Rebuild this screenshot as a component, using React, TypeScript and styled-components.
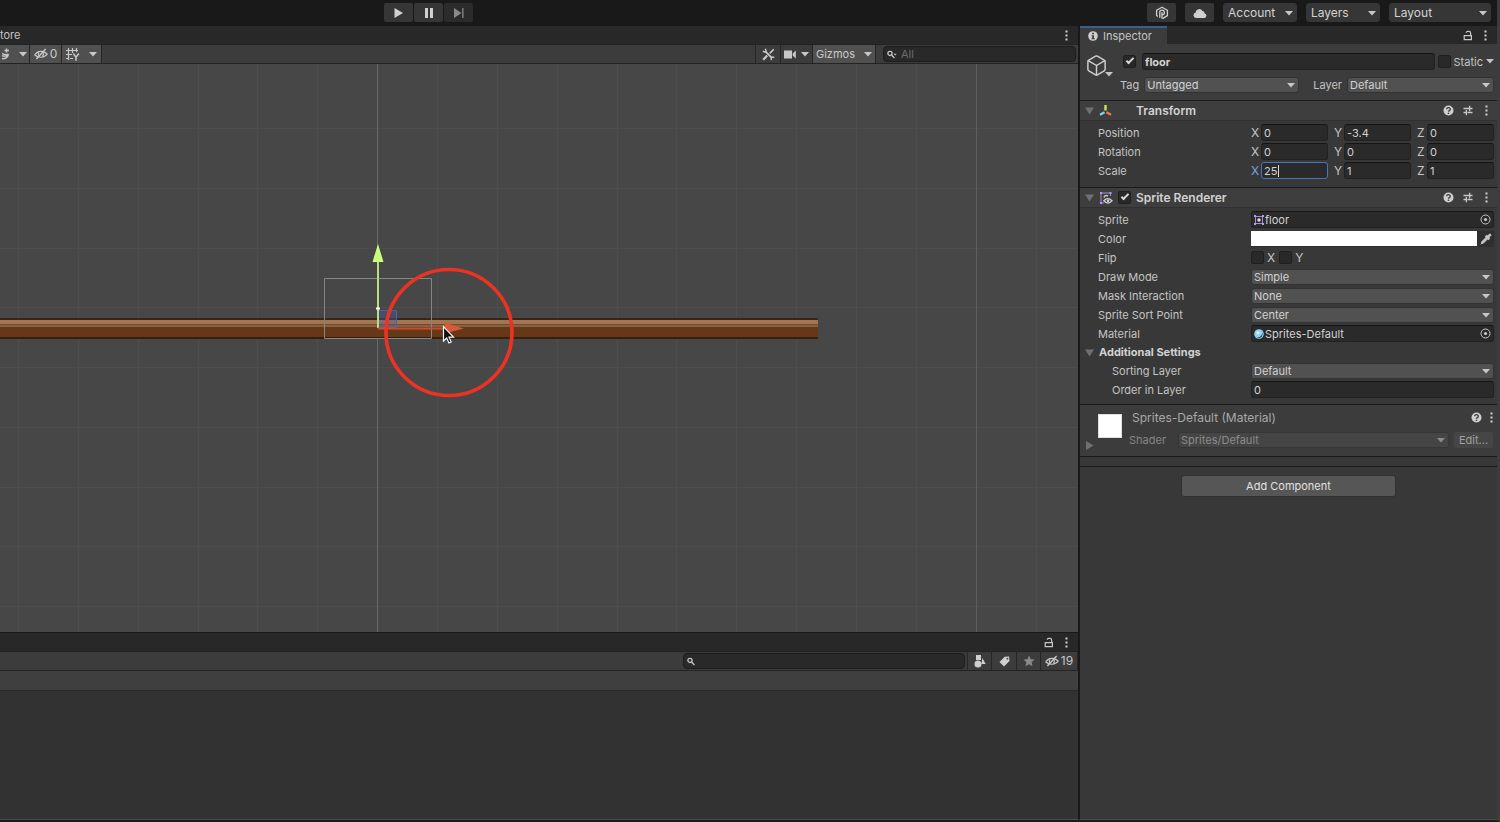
import React from "react";
import styled, { createGlobalStyle, css } from "styled-components";
import { Box, Pipette } from "lucide-react";

const GlobalStyle = createGlobalStyle`
  *, *::before, *::after { box-sizing: border-box; }
  body {
    margin: 0;
    background: #191919;
    color: #c4c4c4;
    font-family: Inter, "Liberation Sans", sans-serif;
    font-size: 12px;
    line-height: 16px;
  }
  button, input, select { font: inherit; color: inherit; margin: 0; }
  svg { display: block; flex: none; }
`;

/* ---------- page frame ---------- */

const Page = styled.div`
  display: flex;
  flex-direction: column;
  min-height: 100vh;
  border-right: 3px solid #3c3c3c;
  border-bottom: 2px solid #1b1c20;
`;

const TopBar = styled.header`
  display: flex;
  justify-content: space-between;
  align-items: flex-start;
  height: 26px;
  padding: 3px 6px 0 384px;
  background: #191919;
`;

const PlayGroup = styled.div`
  display: flex;
  gap: 1px;
`;

const TopRight = styled.div`
  display: flex;
  gap: 9px;
`;

const TopButton = styled.button<{ $dim?: boolean }>`
  display: flex;
  align-items: center;
  justify-content: center;
  width: 29px;
  height: 19px;
  padding: 0;
  border: 0;
  border-radius: 2px;
  background: ${(p) => (p.$dim ? "#2b2b2b" : "#363636")};
  color: ${(p) => (p.$dim ? "#8a8a8a" : "#d0d0d0")};
`;

const Workspace = styled.main`
  flex: 1;
  display: grid;
  grid-template-columns: minmax(0, 1fr) 419px;
`;

const LeftColumn = styled.div`
  display: flex;
  flex-direction: column;
  min-width: 0;
`;

const TabBar = styled.div`
  display: flex;
  align-items: center;
  justify-content: space-between;
  height: 18px;
  background: #282828;
`;

const TabActions = styled.div`
  display: flex;
  align-items: center;
  gap: 8px;
  margin-left: auto;
  padding-right: 7px;
`;

const ClippedTab = styled.span`
  color: #c4c4c4;
  font-size: 11px;
`;

const Toolbar = styled.div`
  display: flex;
  justify-content: space-between;
  height: 20px;
  border-top: 1px solid #232323;
  border-bottom: 1px solid #232323;
  background: #3c3c3c;
`;

const ToolGroup = styled.div<{ $end?: boolean }>`
  display: flex;
  align-items: stretch;
  margin-left: ${(p) => (p.$end ? "auto" : "0")};
`;

const Separator = styled.div`
  width: 1px;
  background: #262626;
`;

const ToolButton = styled.button<{ $on?: boolean; $w: number; $gap?: number }>`
  display: flex;
  align-items: center;
  justify-content: center;
  gap: ${(p) => p.$gap ?? 2}px;
  width: ${(p) => p.$w}px;
  padding: 0;
  border: 0;
  border-right: 1px solid #262626;
  background: ${(p) => (p.$on ? "#505050" : "#3c3c3c")};
  color: #c8c8c8;
`;

const ToolText = styled.span`
  font-size: 11px;
`;

const SearchBox = styled.label<{ $w: number }>`
  display: flex;
  align-items: center;
  gap: 4px;
  align-self: center;
  width: ${(p) => p.$w}px;
  height: 16px;
  margin: 0 2px 0 7px;
  padding: 0 3px;
  border: 1px solid #1c1c1c;
  border-radius: 4px;
  background: #292929;
  input {
    flex: 1;
    min-width: 0;
    height: 14px;
    padding: 0;
    border: 0;
    outline: 0;
    background: transparent;
    font-size: 11px;
  }
  input::placeholder { color: #6c6c6c; }
`;

const SceneView = styled.section`
  flex: 1;
  min-height: 400px;
  overflow: hidden;
  background: #474747;
`;

const ProjectPanel = styled.section`
  display: flex;
  flex-direction: column;
  height: 188px;
  border-top: 1px solid #191919;
`;

const Breadcrumb = styled.div`
  height: 20px;
  border-bottom: 1px solid #2a2a2a;
  background: #3f3f3f;
`;

const ProjectBody = styled.div`
  flex: 1;
  border-bottom: 1px solid #4a4a4a;
  background: #323232;
`;

/* ---------- inspector ---------- */

const Inspector = styled.aside`
  display: flex;
  flex-direction: column;
  border-left: 2px solid #191919;
  border-bottom: 1px solid #4a4a4a;
  background: #383838;
`;

const ActiveTab = styled.div`
  display: flex;
  align-items: center;
  gap: 5px;
  align-self: stretch;
  width: 87px;
  padding-left: 8px;
  border-top: 2px solid #3a5f8e;
  background: #3c3c3c;
  font-size: 11px;
`;

const ObjectHeader = styled.div`
  display: grid;
  grid-template-columns: 30px minmax(0, 1fr);
  gap: 5px;
  height: 56px;
  padding: 9px 3px 0 5px;
  background: #3c3c3c;
`;

const ObjectIcon = styled.div`
  display: flex;
  align-items: flex-end;
  height: 24px;
  svg + svg { margin-left: -3px; }
`;

const HeaderRows = styled.div`
  display: flex;
  flex-direction: column;
  gap: 6px;
`;

const HeaderRow = styled.div<{ $gap: number; $inset?: boolean }>`
  display: flex;
  align-items: center;
  gap: ${(p) => p.$gap}px;
  height: 17px;
  padding-left: ${(p) => (p.$inset ? 3 : 0)}px;
`;

const ComponentHeader = styled.header`
  display: flex;
  align-items: center;
  height: 21px;
  padding: 0 6px 0 5px;
  border-top: 1px solid #1a1a1a;
  border-bottom: 1px solid #303030;
  background: #3e3e3e;
`;

const IconSlot = styled.span<{ $w: number }>`
  display: flex;
  align-items: center;
  width: ${(p) => p.$w}px;
`;

const ComponentTitle = styled.h2`
  flex: 1;
  margin: 0;
  font-size: 12px;
  font-weight: 600;
  line-height: 16px;
  color: #d2d2d2;
`;

const HeaderActions = styled.div`
  display: flex;
  align-items: center;
  gap: 8px;
`;

const Rows = styled.div<{ $end: number }>`
  padding: 2px 3px ${(p) => p.$end}px 18px;
`;

const Row = styled.div<{ $indent?: boolean }>`
  display: grid;
  grid-template-columns: 153px minmax(0, 1fr);
  align-items: center;
  height: 19px;
  > :first-child { padding-left: ${(p) => (p.$indent ? 14 : 0)}px; }
`;

const Label = styled.label`
  font-size: 11px;
  color: #c4c4c4;
`;

const RowName = styled.span`
  font-size: 11px;
  color: #c4c4c4;
`;

const Axes = styled.div`
  display: grid;
  grid-template-columns: repeat(3, minmax(0, 1fr));
  gap: 6px;
`;

const AxisCell = styled.label<{ $active?: boolean }>`
  display: grid;
  grid-template-columns: 10px minmax(0, 1fr);
  align-items: center;
  position: relative;
  color: ${(p) => (p.$active ? "#7ba1d8" : "#c4c4c4")};
`;

const TextCaret = styled.i`
  position: absolute;
  left: 27px;
  top: 3px;
  width: 1px;
  height: 12px;
  background: #d8d8d8;
`;

const fieldBox = css`
  height: 17px;
  border: 1px solid #212121;
  border-top-color: #141414;
  border-radius: 3px;
  background: #2a2a2a;
`;

const Field = styled.input<{ $active?: boolean; $bold?: boolean }>`
  ${fieldBox}
  flex: 1;
  width: 100%;
  min-width: 0;
  padding: 0 2px;
  outline: 0;
  font-size: 11px;
  font-weight: ${(p) => (p.$bold ? 700 : 400)};
  color: #d2d2d2;
  ${(p) => p.$active && "border-color: #4476c2;"}
`;

const Tick = styled.input.attrs({ type: "checkbox" })`
  appearance: none;
  flex: none;
  display: grid;
  place-items: center;
  width: 13px;
  height: 13px;
  border: 1px solid #1f1f1f;
  border-radius: 2px;
  background: #292929;
  &:checked::after {
    content: "";
    width: 8px;
    height: 4px;
    margin-bottom: 3px;
    border: solid #d8d8d8;
    border-width: 0 0 2px 2px;
    transform: rotate(-45deg);
  }
`;

const FlipGroup = styled.div`
  display: flex;
  gap: 4px;
  label {
    display: flex;
    align-items: center;
    gap: 3px;
  }
`;

const SelectFrame = styled.span<{ $w?: number; $tone?: "top" | "faint" }>`
  position: relative;
  display: block;
  ${(p) => (p.$w ? `width: ${p.$w}px;` : "flex: 1;")}
  min-width: 0;
  select {
    appearance: none;
    display: block;
    width: 100%;
    height: ${(p) => (p.$tone === "top" ? 19 : 16)}px;
    padding: 0 16px 0 ${(p) => (p.$tone === "top" ? 4 : 2)}px;
    border: 1px solid ${(p) => (p.$tone ? "#363636" : "#323232")};
    border-radius: 3px;
    outline: 0;
    background: ${(p) => (p.$tone === "top" ? "#363636" : p.$tone === "faint" ? "#454545" : "#515151")};
    color: ${(p) => (p.$tone === "faint" ? "#8c8c8c" : "#d2d2d2")};
    font-size: ${(p) => (p.$tone === "top" ? 12 : 11)}px;
    line-height: 14px;
  }
  svg {
    position: absolute;
    right: 4px;
    top: calc(50% - 2px);
    color: ${(p) => (p.$tone === "faint" ? "#8c8c8c" : "#c8c8c8")};
    pointer-events: none;
  }
`;

const ObjectField = styled.button`
  ${fieldBox}
  display: flex;
  align-items: center;
  gap: 1px;
  width: 100%;
  padding: 0 2px;
  font-size: 11px;
  text-align: left;
  span { flex: 1; color: #d2d2d2; }
`;

const ColorField = styled.div`
  display: flex;
  align-items: center;
  height: 16px;
  background: #2f2f2f;
`;

const ColorSwatch = styled.button`
  flex: 1;
  height: 15px;
  border: 0;
  padding: 0;
  background: #fff;
`;

const IconButton = styled.button`
  display: flex;
  align-items: center;
  justify-content: center;
  padding: 0;
  border: 0;
  background: transparent;
  color: #c8c8c8;
`;

const MenuButton = styled(IconButton)`
  width: 9px;
`;

const PipetteButton = styled(IconButton)`
  width: 17px;
  height: 16px;
`;

const SubHeading = styled.h3`
  display: flex;
  align-items: center;
  gap: 5px;
  height: 18px;
  margin: 0 0 0 -13px;
  font-size: 11px;
  font-weight: 700;
  color: #d2d2d2;
`;

const MaterialSection = styled.section`
  display: grid;
  grid-template-columns: 13px 24px minmax(0, 1fr);
  height: 53px;
  padding: 4px 4px 0 5px;
  border-top: 1px solid #1a1a1a;
  border-bottom: 1px solid #1a1a1a;
  background: #3c3c3c;
`;

const FoldoutSlot = styled.div`
  padding-top: 32px;
`;

const MaterialSwatch = styled.div`
  width: 24px;
  height: 24px;
  margin-top: 5px;
  border: 1px solid #ddd;
  background: #fff;
`;

const MaterialBody = styled.div`
  display: flex;
  flex-direction: column;
  gap: 6px;
  padding-left: 7px;
`;

const MaterialTitle = styled.div`
  display: flex;
  align-items: center;
  justify-content: space-between;
  height: 17px;
  padding-left: 3px;
  color: #a8a8a8;
  font-size: 12px;
`;

const MaterialRow = styled.div`
  display: flex;
  align-items: center;
  gap: 5px;
  color: #858585;
  label { width: 44px; font-size: 11px; }
`;

const EditButton = styled.button`
  width: 39px;
  height: 16px;
  padding: 0;
  border: 0;
  border-radius: 2px;
  background: #464646;
  color: #a0a0a0;
  font-size: 11px;
  line-height: 14px;
`;

const Divider = styled.div`
  height: 10px;
  border-bottom: 1px solid #1a1a1a;
`;

const AddButton = styled.button`
  align-self: center;
  width: 215px;
  height: 22px;
  margin-top: 8px;
  padding: 0;
  border: 1px solid #303030;
  border-radius: 3px;
  background: #565656;
  color: #e0e0e0;
  font-size: 11px;
`;

/* ---------- icons ---------- */

const Caret = () => (
  <svg width="8" height="5" viewBox="0 0 8 5" fill="currentColor"><path d="M0 0h8L4 4.6z" /></svg>
);
const Foldout = ({ closed }: { closed?: boolean }) => (
  <svg width="9" height="9" viewBox="0 0 9 9" fill="#707070">
    <path d={closed ? "M1 0l7.500 4.500L1 9z" : "M0 1.500h9L4.500 8.500z"} />
  </svg>
);
const Kebab = () => (
  <svg width="3" height="11" viewBox="0 0 3 11" fill="#d0d0d0">
    <path d="M.5.5h2v2h-2zM.5 4.500h2v2h-2zM.5 8.500h2v2h-2z" />
  </svg>
);
const Lock = () => (
  <svg width="10" height="11" viewBox="0 0 10 11" fill="none" stroke="#c8c8c8" strokeWidth="1.200">
    <path d="M1.200 5.600h7.200v4H1.200zM7.600 5.600V3a1.600 1.600 0 0 0-1.600-1.600H4.800A1.600 1.600 0 0 0 3.200 2.800" />
  </svg>
);
const Help = () => (
  <svg width="11" height="11" viewBox="0 0 11 11">
    <circle cx="5.500" cy="5.500" r="5" fill="#cfcfcf" />
    <path d="M3.700 4.300a1.800 1.600 0 1 1 2.600 1.300q-.8.400-.8 1.200" fill="none" stroke="#3a3a3a" strokeWidth="1.300" />
    <path d="M4.800 7.600h1.400v1.300H4.800z" fill="#3a3a3a" />
  </svg>
);
const Preset = () => (
  <svg width="12" height="11" viewBox="0 0 12 11" fill="none" stroke="#c8c8c8" strokeWidth="1.300">
    <path d="M1.500 3.500h5.500M7.600.8v5.400M7.600 3.500H10.500M1.500 7.500H4.400M4.400 5v5.200M5.500 7.500h5" />
  </svg>
);
const Info = () => (
  <svg width="10" height="10" viewBox="0 0 10 10">
    <circle cx="5" cy="5" r="4.800" fill="#d0d0d0" />
    <path d="M4.200 1.700h1.700v1.500H4.200zM3.600 4.200h2.300v3h.8v1H3.500v-1h.8v-2h-.7z" fill="#333" />
  </svg>
);
const Magnifier = ({ menu }: { menu?: boolean }) => (
  <svg width={menu ? 10 : 8} height="9" viewBox={menu ? "0 0 10 9" : "0 0 8 9"} fill="none" stroke="#c8c8c8" strokeWidth="1.300">
    <circle cx="3" cy="3.400" r="2.100" />
    <path d="M4.600 5l2.800 3" />
    {menu && <path d="M6.600 3.800h3.200L8.200 5.600z" fill="#c8c8c8" stroke="none" />}
  </svg>
);
const HiddenEye = () => (
  <svg width="14" height="12" viewBox="0 0 14 12" fill="none" stroke="#c8c8c8" strokeWidth="1.200">
    <path d="M.8 7C3.500 2.200 10 2.200 13.200 6.200 10.500 10 4 10.200.8 7z" />
    <path d="M5 4.500a2.300 2.300 0 0 0 .4 3.600M8.400 4.200a2.300 2.300 0 0 1-.2 4" />
    <path d="M2.400 11L11.600 1" strokeWidth="1.400" />
  </svg>
);
const GridY = () => (
  <svg width="14" height="13" viewBox="0 0 14 13" fill="none" stroke="#c8c8c8" strokeWidth="1.200">
    <path d="M0 2.500h12M0 6.500h6M0 10.500h2M4 10.500h3M2.500 0v12M6.500 0v5M10.500 0v4" />
    <path d="M7.300 5.500l2.700 3.700 2.800-3.700M10 9v3.800" strokeWidth="1.500" />
  </svg>
);
const Effects = () => (
  <svg width="8" height="12" viewBox="0 0 8 12" fill="none" stroke="#c8c8c8" strokeWidth="1.500">
    <path d="M4.500.5v4M2.500 2.500h4.500M0 5.300q2.500 2 6.500 1M0 7.800q4 1.200 6.500-1.500M0 10.500q4.500 1 6.500-4" />
  </svg>
);
const ToolsIcon = () => (
  <svg width="13" height="13" viewBox="0 0 13 13" fill="none" stroke="#c8c8c8">
    <path d="M11.800 1.200L7.700 5.400" strokeWidth="1.600" />
    <path d="M5.200 7.600l-4 4.200" strokeWidth="2.200" />
    <path d="M3.800 3.900l6 6" strokeWidth="1.800" />
    <path d="M.8 3.300l2.400.8.900-.9-.7-2.400" strokeWidth="1.500" />
    <path d="M9.400 12.200l-.3-2.300 1-.9 2.300.4" strokeWidth="1.400" />
  </svg>
);
const Camera = () => (
  <svg width="12" height="9" viewBox="0 0 12 9" fill="#c8c8c8"><path d="M0 .5h8v8H0zM8.700 3.500L11.800.5v8L8.700 5.500z" /></svg>
);
const Play = () => (
  <svg width="9" height="10" viewBox="0 0 9 10" fill="currentColor"><path d="M.5 0L9 5 .5 10z" /></svg>
);
const Pause = () => (
  <svg width="8" height="10" viewBox="0 0 8 10" fill="currentColor"><path d="M0 0h3v10H0zM5 0h3v10H5z" /></svg>
);
const Step = () => (
  <svg width="10" height="10" viewBox="0 0 10 10" fill="currentColor"><path d="M0 0l7.500 5L0 10zM8.200 0h1.300v10H8.200z" /></svg>
);
const CollabIcon = () => (
  <svg width="14" height="14" viewBox="0 0 14 14" fill="none" stroke="#d0d0d0" strokeWidth="1.300" strokeLinejoin="round">
    <path d="M2.800 10.400L1.600 9.400V4.200L7 1.200l5.400 3v5.400L7.600 12.600" />
    <path d="M4.800 11.800V6.200Q4.800 4.200 7 4.200t2.400 2.200Q9.400 8.800 7 8.800" />
    <path d="M7 6.200v6.600" />
  </svg>
);
const Cloud = () => (
  <svg width="14" height="10" viewBox="0 0 14 10" fill="#d0d0d0">
    <path d="M3 10a2.800 2.800 0 0 1-.4-5.500A3.700 3.700 0 0 1 9.500 3 2.500 2.500 0 0 1 11.700 5.500 2.300 2.300 0 0 1 11.500 10z" />
  </svg>
);
const TransformIcon = () => (
  <svg width="13" height="13" viewBox="0 0 13 13" fill="none" strokeWidth="2.400">
    <path d="M6.500 1v5.500" stroke="#c6e85a" />
    <path d="M5.500 8.200L1 10.800" stroke="#7cd3f2" />
    <path d="M7.500 8.200L12 10.800" stroke="#f0764a" />
  </svg>
);
const SpriteRendererIcon = () => (
  <svg width="14" height="14" viewBox="0 0 14 14" fill="none">
    <path d="M2 2h9.500M2 2v10M11.500 2v3M2 12h3" stroke="#a58ad8" />
    <path d="M1 1h2v2H1zM10.500 1h2v2h-2zM1 11h2v2H1z" fill="#b49ae8" />
    <path d="M5 6.500q1-3 4-1.500" stroke="#c8c8c8" strokeWidth="1.600" />
    <path d="M4.800 9.800q4-4.500 8.200 0-4 4.500-8.200 0z" stroke="#d0d0d0" strokeWidth="1.300" />
    <circle cx="9" cy="9.800" r="1.300" fill="#d0d0d0" />
  </svg>
);
const SpriteIcon = () => (
  <svg width="10" height="10" viewBox="0 0 10 10" fill="none">
    <path d="M1.500 1.500h7v7h-7z" stroke="#a58ad8" />
    <path d="M0 0h2v2H0zM8 0h2v2H8zM0 8h2v2H0zM8 8h2v2H8z" fill="#b49ae8" />
    <circle cx="5" cy="5" r="1.700" fill="#e0e0e0" />
  </svg>
);
const MaterialIcon = () => (
  <svg width="10" height="10" viewBox="0 0 10 10">
    <circle cx="5" cy="5" r="4.800" fill="#8fd0ee" />
    <path d="M8.200 3A4.300 4.300 0 0 1 3 8.200Q5.500 9.800 7.800 7.800 9.500 5.500 8.200 3z" fill="#1d3442" />
    <circle cx="4" cy="3.800" r="1.600" fill="#d6f2fc" />
  </svg>
);
const Picker = () => (
  <svg width="11" height="11" viewBox="0 0 11 11" fill="none" stroke="#c8c8c8">
    <circle cx="5.500" cy="5.500" r="4.500" />
    <circle cx="5.500" cy="5.500" r="1.600" fill="#c8c8c8" stroke="none" />
  </svg>
);
const Shapes = () => (
  <svg width="12" height="13" viewBox="0 0 12 13" fill="#d0d0d0">
    <path d="M2 0h5v5H2zM8.300 3l3.400 6H7.500z" />
    <circle cx="4" cy="9" r="3.500" />
  </svg>
);
const TagIcon = () => (
  <svg width="11" height="11" viewBox="0 0 11 11">
    <path d="M5.700.8L10 .5 10.500 5 5 10.500.5 6z" fill="#d0d0d0" />
    <circle cx="8.400" cy="2.700" r=".9" fill="#3c3c3c" />
  </svg>
);
const Star = () => (
  <svg width="12" height="12" viewBox="0 0 12 12" fill="#8a8a8a">
    <path d="M6 .5l1.600 3.700 4 .4-3 2.700.9 4L6 9.200l-3.500 2.100.9-4-3-2.700 4-.4z" />
  </svg>
);

/* ---------- scene drawing ---------- */

const columns = Array.from({ length: 44 }, (_, i) => 18 + Math.round(i * 59.86));
const gridRows = Array.from({ length: 24 }, (_, i) => 64 + Math.round(i * 59.75));

const SceneDrawing = () => (
  <svg width="100%" height="100%" role="img" aria-label="Scene with a wooden floor and a move gizmo">
    <g stroke="#4d4d4d">
      {columns.map((x) => <path key={x} d={`M${x + 0.5} 0v1600`} />)}
      {gridRows.map((y) => <path key={y} d={`M0 ${y + 0.5}h2700`} />)}
    </g>
    <path d="M377.500 0v1600" stroke="#6a6a6a" />
    <path d="M976.500 0v1600" stroke="#5e5e5e" />
    <g>
      <path d="M0 255h818v20H0z" fill="#663818" />
      <path d="M0 254h818v2H0z" fill="#3a2519" />
      <path d="M0 256h818v4H0z" fill="#a37650" />
      <path d="M0 260h818v1H0z" fill="#6b4e38" />
      <path d="M0 261h818v2H0z" fill="#8a6040" />
      <path d="M0 273h818v2H0z" fill="#33200f" />
    </g>
    <path d="M324.500 214.500h107v60h-107z" fill="none" stroke="#858585" />
    <path d="M378.500 246.500h18v17h-18z" fill="#4a5a9a" fillOpacity=".4" stroke="#4f5fae" />
    <path d="M378 196v68" stroke="#b7e07a" strokeWidth="2" />
    <path d="M378 180l5.500 18h-11z" fill="#c9ff7d" />
    <path d="M378 264.500h67" stroke="#c5502f" strokeWidth="2" />
    <path d="M445 258.500l18.500 6-18.500 5z" fill="#d9573a" />
    <path d="M376 243.500h4v2h-4z" fill="#fff" />
    <circle cx="449" cy="268.500" r="63" fill="none" stroke="#ec3323" strokeWidth="3.600" />
    <path d="M443.500 262.500v14.500l3.200-3 2.200 5 2.300-1-2.200-4.800h4.500z" fill="#111" stroke="#f4f4f4" strokeWidth="1.200" />
  </svg>
);

/* ---------- controls ---------- */

type SelectProps = { id?: string; label?: string; value: string; width?: number; tone?: "top" | "faint" };
const Dropdown = ({ id, label, value, width, tone }: SelectProps) => (
  <SelectFrame $w={width} $tone={tone}>
    <select id={id} aria-label={label} defaultValue={value}><option>{value}</option></select>
    <Caret />
  </SelectFrame>
);

const SelectRow = ({ id, name, value, indent }: { id: string; name: string; value: string; indent?: boolean }) => (
  <Row $indent={indent}>
    <Label htmlFor={id}>{name}</Label>
    <Dropdown id={id} value={value} />
  </Row>
);

const VectorRow = ({ name, values, active }: { name: string; values: string[]; active?: number }) => (
  <Row>
    <RowName>{name}</RowName>
    <Axes role="group" aria-label={name}>
      {["X", "Y", "Z"].map((axis, i) => (
        <AxisCell key={axis} $active={active === i}>
          {axis}
          <Field defaultValue={values[i]} $active={active === i} />
          {active === i && <TextCaret />}
        </AxisCell>
      ))}
    </Axes>
  </Row>
);

const ComponentActions = () => (
  <HeaderActions>
    <IconButton aria-label="Help"><Help /></IconButton>
    <IconButton aria-label="Presets"><Preset /></IconButton>
    <MenuButton aria-label="Component menu"><Kebab /></MenuButton>
  </HeaderActions>
);

export default function App() {
  return (
    <>
      <GlobalStyle />
      <Page>
        <TopBar>
          <PlayGroup>
            <TopButton aria-label="Play"><Play /></TopButton>
            <TopButton aria-label="Pause"><Pause /></TopButton>
            <TopButton aria-label="Step" $dim><Step /></TopButton>
          </PlayGroup>
          <TopRight>
            <TopButton aria-label="Collaborate"><CollabIcon /></TopButton>
            <TopButton aria-label="Cloud services"><Cloud /></TopButton>
            <Dropdown label="Account menu" value="Account" width={74} tone="top" />
            <Dropdown label="Layers menu" value="Layers" width={74} tone="top" />
            <Dropdown label="Layout menu" value="Layout" width={102} tone="top" />
          </TopRight>
        </TopBar>
        <Workspace>
          <LeftColumn>
            <TabBar>
              <ClippedTab>tore</ClippedTab>
              <TabActions>
                <MenuButton aria-label="Scene menu"><Kebab /></MenuButton>
              </TabActions>
            </TabBar>
            <Toolbar>
              <ToolGroup>
                <ToolButton $on $w={30} $gap={9} aria-label="Effects"><Effects /><Caret /></ToolButton>
                <ToolButton $on $w={32}><HiddenEye />0</ToolButton>
                <ToolButton $on $w={40} $gap={9} aria-label="Grid"><GridY /><Caret /></ToolButton>
              </ToolGroup>
              <ToolGroup $end>
                <Separator />
                <ToolButton $w={25} aria-label="Tools"><ToolsIcon /></ToolButton>
                <ToolButton $w={32} $gap={5} aria-label="Camera"><Camera /><Caret /></ToolButton>
                <ToolButton $on $w={63} $gap={9}><ToolText>Gizmos</ToolText><Caret /></ToolButton>
                <SearchBox $w={193}>
                  <Magnifier menu />
                  <input type="text" placeholder="All" aria-label="Search scene" />
                </SearchBox>
              </ToolGroup>
            </Toolbar>
            <SceneView><SceneDrawing /></SceneView>
            <ProjectPanel>
              <TabBar>
                <TabActions>
                  <IconButton aria-label="Lock project"><Lock /></IconButton>
                  <MenuButton aria-label="Project menu"><Kebab /></MenuButton>
                </TabActions>
              </TabBar>
              <Toolbar>
                <ToolGroup $end>
                  <SearchBox $w={282}>
                    <Magnifier />
                    <input type="text" aria-label="Search project" />
                  </SearchBox>
                  <Separator />
                  <ToolButton $w={24} aria-label="Search by type"><Shapes /></ToolButton>
                  <ToolButton $w={25} aria-label="Search by label"><TagIcon /></ToolButton>
                  <ToolButton $w={24} aria-label="Save search"><Star /></ToolButton>
                  <ToolButton $w={37}><HiddenEye />19</ToolButton>
                </ToolGroup>
              </Toolbar>
              <Breadcrumb />
              <ProjectBody />
            </ProjectPanel>
          </LeftColumn>

          <Inspector>
            <TabBar>
              <ActiveTab><Info />Inspector</ActiveTab>
              <TabActions>
                <IconButton aria-label="Lock inspector"><Lock /></IconButton>
                <MenuButton aria-label="Inspector menu"><Kebab /></MenuButton>
              </TabActions>
            </TabBar>
            <ObjectHeader>
              <ObjectIcon>
                <Box size={23} strokeWidth={1.5} color="#d0d0d0" />
                <Caret />
              </ObjectIcon>
              <HeaderRows>
                <HeaderRow $gap={3} $inset>
                  <IconSlot $w={16}><Tick defaultChecked aria-label="Active" /></IconSlot>
                  <Field $bold defaultValue="floor" aria-label="Name" />
                  <Tick id="static" />
                  <Label htmlFor="static">Static</Label>
                  <Caret />
                </HeaderRow>
                <HeaderRow $gap={5}>
                  <Label htmlFor="tag">Tag</Label>
                  <Dropdown id="tag" value="Untagged" width={155} />
                  <IconSlot $w={4} />
                  <Label htmlFor="layer">Layer</Label>
                  <Dropdown id="layer" value="Default" />
                </HeaderRow>
              </HeaderRows>
            </ObjectHeader>

            <section>
              <ComponentHeader>
                <IconSlot $w={14}><Foldout /></IconSlot>
                <IconSlot $w={37}><TransformIcon /></IconSlot>
                <ComponentTitle>Transform</ComponentTitle>
                <ComponentActions />
              </ComponentHeader>
              <Rows $end={7}>
                <VectorRow name="Position" values={["0", "-3.4", "0"]} />
                <VectorRow name="Rotation" values={["0", "0", "0"]} />
                <VectorRow name="Scale" values={["25", "1", "1"]} active={0} />
              </Rows>
            </section>

            <section>
              <ComponentHeader>
                <IconSlot $w={14}><Foldout /></IconSlot>
                <IconSlot $w={19}><SpriteRendererIcon /></IconSlot>
                <IconSlot $w={18}><Tick defaultChecked aria-label="Sprite Renderer enabled" /></IconSlot>
                <ComponentTitle>Sprite Renderer</ComponentTitle>
                <ComponentActions />
              </ComponentHeader>
              <Rows $end={5}>
                <Row>
                  <RowName>Sprite</RowName>
                  <ObjectField><SpriteIcon /><span>floor</span><Picker /></ObjectField>
                </Row>
                <Row>
                  <RowName>Color</RowName>
                  <ColorField>
                    <ColorSwatch aria-label="Sprite color" />
                    <PipetteButton aria-label="Pick a color"><Pipette size={12} fill="#c8c8c8" /></PipetteButton>
                  </ColorField>
                </Row>
                <Row>
                  <RowName>Flip</RowName>
                  <FlipGroup>
                    <label><Tick />X</label>
                    <label><Tick />Y</label>
                  </FlipGroup>
                </Row>
                <SelectRow id="draw" name="Draw Mode" value="Simple" />
                <SelectRow id="mask" name="Mask Interaction" value="None" />
                <SelectRow id="sort" name="Sprite Sort Point" value="Center" />
                <Row>
                  <RowName>Material</RowName>
                  <ObjectField><MaterialIcon /><span>Sprites-Default</span><Picker /></ObjectField>
                </Row>
                <SubHeading><Foldout />Additional Settings</SubHeading>
                <SelectRow id="sorting" name="Sorting Layer" value="Default" indent />
                <Row $indent>
                  <Label htmlFor="order">Order in Layer</Label>
                  <Field id="order" defaultValue="0" />
                </Row>
              </Rows>
            </section>

            <MaterialSection>
              <FoldoutSlot><Foldout closed /></FoldoutSlot>
              <MaterialSwatch />
              <MaterialBody>
                <MaterialTitle>
                  Sprites-Default (Material)
                  <HeaderActions>
                    <IconButton aria-label="Material help"><Help /></IconButton>
                    <IconButton aria-label="Material menu"><Kebab /></IconButton>
                  </HeaderActions>
                </MaterialTitle>
                <MaterialRow>
                  <label htmlFor="shader">Shader</label>
                  <Dropdown id="shader" value="Sprites/Default" tone="faint" />
                  <EditButton>Edit...</EditButton>
                </MaterialRow>
              </MaterialBody>
            </MaterialSection>
            <Divider />
            <AddButton>Add Component</AddButton>
          </Inspector>
        </Workspace>
      </Page>
    </>
  );
}
